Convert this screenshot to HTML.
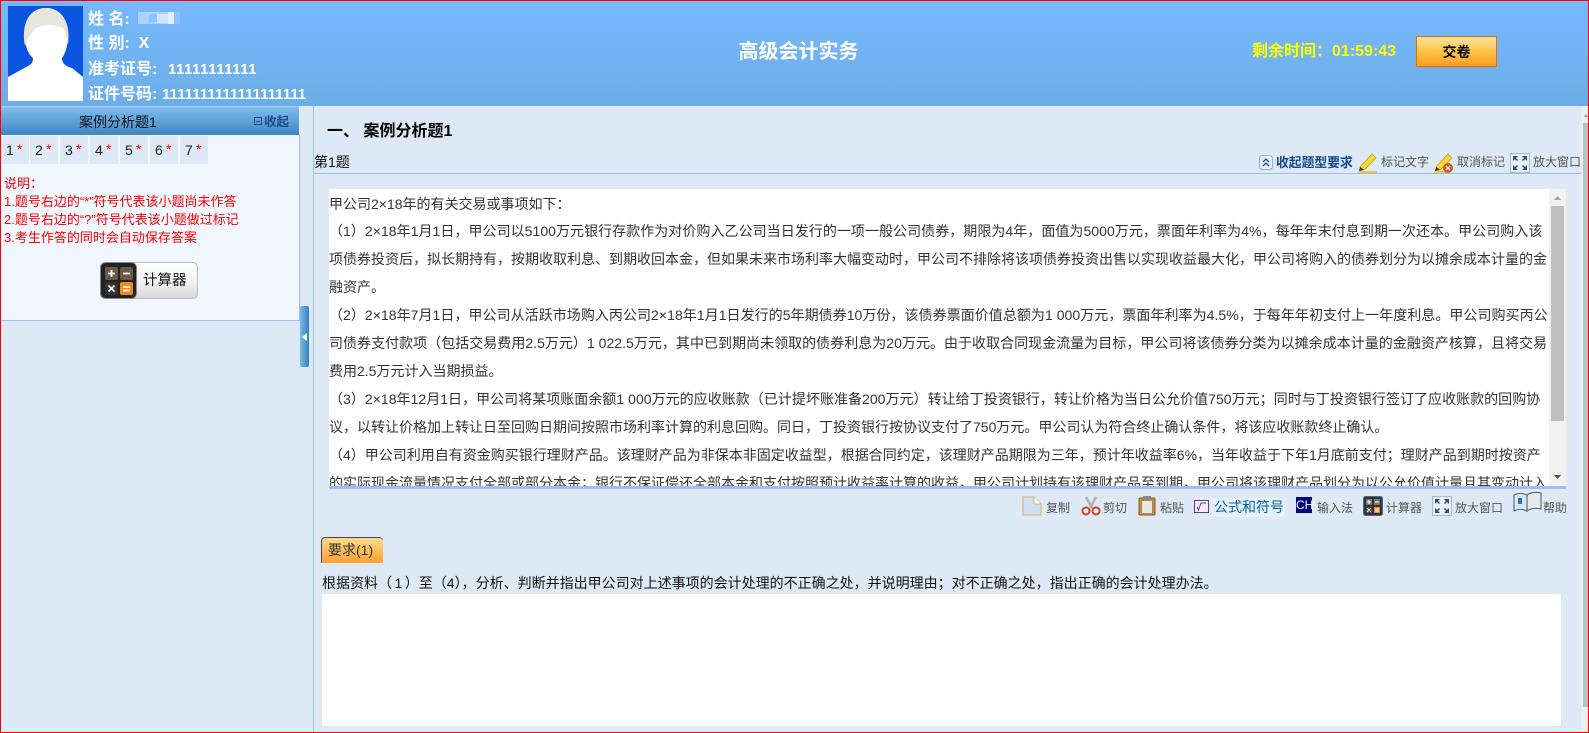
<!DOCTYPE html>
<html lang="zh-CN"><head><meta charset="utf-8"><title>高级会计实务</title>
<style>
*{box-sizing:border-box}
html,body{margin:0;padding:0}
body{width:1589px;height:733px;overflow:hidden;position:relative;background:#dde9f5;font-family:"Liberation Sans","Noto Sans CJK SC",sans-serif;font-size:14px;color:#333}
.a{position:absolute;white-space:nowrap}
.hd{left:0;top:0;width:1589px;height:106px;background:linear-gradient(#78b9ff,#6cade8)}
.w{color:#fff;font-weight:bold;font-size:16px;line-height:24px;left:88px}
.w b{position:absolute;top:0;font-size:15px;font-weight:bold}
.q{top:136px;width:28px;height:28px;background:#dde9f5;color:#222;font-size:14px;line-height:28px}
.q span{position:absolute;left:5px}
.q i{position:absolute;left:16px;top:-1px;font-style:normal;color:#f00;font-size:14px}
.r{left:4px;color:#f00;font-size:13px;line-height:18px}
.t{position:absolute;left:0;white-space:nowrap;line-height:28px;height:28px;color:#333}
.g{color:#555;font-size:12px;line-height:16px}
svg{position:absolute;overflow:visible}
</style></head><body>
<div class="a hd"></div>
<svg style="left:8px;top:6px" width="75" height="95" viewBox="0 0 75 95"><rect width="75" height="95" fill="#0a55e0"/><path d="M0 71L20 60C24 58 25 56 25 52C20 48 17 40 17 30C15 14 24 2 38 2C52 2 61 14 60 30C60 40 57 48 54 52C54 56 56 60 64 62L75 71V95H0Z" fill="#fff"/><path d="M17 40C13 20 20 2 38 2C54 2 63 18 60 38C58 30 58 26 55 22C45 18 35 18 28 22C25 26 20 30 17 40Z" fill="#e6e6da"/></svg>
<div class="a w" style="top:8px;">姓&nbsp;名:</div>
<svg style="left:138px;top:12px" width="42" height="12"><rect width="42" height="12" fill="#a9d2ff"/><rect x="11" y="2" width="8" height="8" fill="#8cc2ff"/><rect x="19" y="2" width="12" height="9" fill="#cfe4ff"/><rect x="30" width="6" height="12" fill="#e4f0ff"/><rect x="36" width="6" height="12" fill="#8fc3fb"/></svg>
<div class="a w" style="top:32px">性&nbsp;别:&nbsp; X</div>
<div class="a w" style="top:58px">准考证号:<b style="left:80px;letter-spacing:.5px">11111111111</b></div>
<div class="a w" style="top:83px">证件号码:<b style="left:74px;letter-spacing:.03px">1111111111111111111</b></div>
<div class="a" style="left:728px;top:38px;width:141px;text-align:center;color:#fff;font-weight:bold;font-size:20px;line-height:28px">高级会计实务</div>
<div class="a" style="left:1252px;top:41px;color:#ff0;font-weight:bold;font-size:16px;line-height:22px">剩余时间：<span style="font-size:16px">01:59:43</span></div>
<div class="a" style="left:1416px;top:36px;width:81px;height:31px;border:1px solid #de7000;background:linear-gradient(#f8e2a4,#ffc040 55%,#ff9a26);color:#000;font-weight:bold;font-size:14px;line-height:30px;text-align:center">交卷</div>

<div class="a" style="left:1px;top:106px;width:298px;height:29px;background:linear-gradient(#a6c4f0 0,#a6c4f0 1px,#7dbbec 2px,#3f87c4);"></div>
<div class="a" style="left:79px;top:111px;color:#111;font-size:14px;line-height:22px">案例分析题1</div>
<div class="a" style="left:254px;top:117px;width:8px;height:8px;border:1px solid #1f4e8c"></div>
<div class="a" style="left:256px;top:121px;width:4px;height:1px;background:#1f4e8c"></div>
<div class="a" style="left:264px;top:111px;color:#1a4a8a;font-weight:bold;font-size:12.500px;line-height:22px">收起</div>

<div class="a" style="left:1px;top:135px;width:299px;height:186px;background:#f0f7ff;border-right:1px solid #a3bcee;border-bottom:1px solid #a3bcee"></div>
<div class="a q" style="left:1px"><span>1</span><i>*</i></div>
<div class="a q" style="left:30px"><span>2</span><i>*</i></div>
<div class="a q" style="left:60px"><span>3</span><i>*</i></div>
<div class="a q" style="left:90px"><span>4</span><i>*</i></div>
<div class="a q" style="left:120px"><span>5</span><i>*</i></div>
<div class="a q" style="left:150px"><span>6</span><i>*</i></div>
<div class="a q" style="left:180px"><span>7</span><i>*</i></div>
<div class="a r" style="top:175px">说明：</div>
<div class="a r" style="top:193px">1.题号右边的“*”符号代表该小题尚未作答</div>
<div class="a r" style="top:211px">2.题号右边的“?”符号代表该小题做过标记</div>
<div class="a r" style="top:229px">3.考生作答的同时会自动保存答案</div>
<div class="a" style="left:100px;top:262px;width:98px;height:37px;border:1px solid #bbb;border-radius:5px;background:linear-gradient(#fff,#f4f4f4 50%,#d8d8d8)"></div>
<svg style="left:100px;top:262px" width="37" height="37" viewBox="0 0 37 37"><rect x=".5" y=".5" width="36" height="36" rx="5" fill="#222" stroke="#888"/><rect x="5" y="5" width="13" height="13" rx="2" fill="#6b5a4c"/><rect x="20" y="5" width="13" height="13" rx="2" fill="#6b5a4c"/><rect x="5" y="20" width="13" height="13" rx="2" fill="#333"/><rect x="20" y="20" width="13" height="13" rx="2" fill="#ee8a1c"/><path d="M8 11.5h7M11.5 8v7M23 11.500h7M8.500 23.500l6 6M14.500 23.500l-6 6M23 25h7M23 28.500h7" stroke="#fff" stroke-width="1.800" fill="none"/></svg>
<div class="a" style="left:143px;top:270px;color:#111;font-size:14.500px;line-height:22px">计算器</div>

<div class="a" style="left:300px;top:306px;width:9px;height:61px;border-radius:2px;background:linear-gradient(90deg,#7fb8e6,#2f82c6)"></div>
<svg style="left:302px;top:333px" width="5" height="8"><path d="M5 0V8L0 4Z" fill="#fff"/></svg>
<div class="a" style="left:313px;top:106px;width:1px;height:626px;background:#a3bcee"></div>

<div class="a" style="left:327px;top:121px;color:#000;font-weight:bold;font-size:16px;line-height:22px">一、 案例分析题1</div>
<div class="a" style="left:314px;top:152px;color:#111;font-size:14px;line-height:20px">第1题</div>
<div class="a" style="left:314px;top:173px;width:1267px;height:1px;background:#a3bcee"></div>

<svg style="left:1259px;top:155px" width="15" height="15"><rect x=".5" y=".5" width="13" height="14" rx="3" fill="#e8f0fa" stroke="#9db0c8"/><path d="M4 7l3-3 3 3M4 11l3-3 3 3" stroke="#1a4a8a" stroke-width="1.300" fill="none"/></svg>
<div class="a" style="left:1276px;top:154px;color:#174a8c;font-weight:bold;font-size:12.800px;line-height:18px">收起题型要求</div>
<svg style="left:1358px;top:153px" width="20" height="20"><path d="M2 14L14 1l4 4L6 17Z" fill="#f8d838" stroke="#c89a10" stroke-width=".8"/><path d="M2 14l4 3-5 1Z" fill="#333"/><rect x="0" y="18" width="19" height="2" fill="#f0c830"/></svg>
<div class="a g" style="left:1381px;top:154px">标记文字</div>
<svg style="left:1434px;top:153px" width="20" height="20"><path d="M2 14L14 1l4 4L6 17Z" fill="#f8d838" stroke="#c89a10" stroke-width=".8"/><path d="M2 14l4 3-5 1Z" fill="#333"/><rect x="0" y="18" width="12" height="2" fill="#f0c830"/><circle cx="14" cy="15" r="5" fill="#d0582a"/><path d="M12 13l4 4M16 13l-4 4" stroke="#fff" stroke-width="1.300"/></svg>
<div class="a g" style="left:1457px;top:154px">取消标记</div>
<svg style="left:1510px;top:153px" width="20" height="20"><rect x=".5" y=".5" width="19" height="19" fill="#e8f0f8" stroke="#b0b8c0"/><path d="M3 3h5l-2 2 2 2-1 1-2-2-2 2ZM17 3v5l-2-2-2 2-1-1 2-2-2-2ZM3 17v-5l2 2 2-2 1 1-2 2 2 2ZM17 17h-5l2-2-2-2 1-1 2 2 2-2Z" fill="#1d4f94"/></svg>
<div class="a g" style="left:1533px;top:154px">放大窗口</div>

<div class="a" style="left:1581px;top:106px;width:7px;height:626px;background:#eeeeee"></div>
<div class="a" style="left:1583px;top:123px;width:5px;height:584px;background:#bdbdbd"></div>
<svg style="left:1584px;top:114px" width="4" height="3"><path d="M0 3L2 0L4 3Z" fill="#999"/></svg>

<div class="a" style="left:329px;top:189px;width:1237px;height:297px;background:#fff;overflow:hidden">
<div class="t" style="top:1px">甲公司2×18年的有关交易或事项如下：</div>
<div class="t" style="top:28px;letter-spacing:.045px">（1）2×18年1月1日，甲公司以5100万元银行存款作为对价购入乙公司当日发行的一项一般公司债券，期限为4年，面值为5000万元，票面年利率为4%，每年年末付息到期一次还本。甲公司购入该</div>
<div class="t" style="top:56px">项债券投资后，拟长期持有，按期收取利息、到期收回本金，但如果未来市场利率大幅变动时，甲公司不排除将该项债券投资出售以实现收益最大化，甲公司将购入的债券划分为以摊余成本计量的金</div>
<div class="t" style="top:84px">融资产。</div>
<div class="t" style="top:112px;letter-spacing:.045px">（2）2×18年7月1日，甲公司从活跃市场购入丙公司2×18年1月1日发行的5年期债券10万份，该债券票面价值总额为1 000万元，票面年利率为4.5%，于每年年初支付上一年度利息。甲公司购买丙公</div>
<div class="t" style="top:140px;letter-spacing:.025px">司债券支付款项（包括交易费用2.5万元）1 022.5万元，其中已到期尚未领取的债券利息为20万元。由于收取合同现金流量为目标，甲公司将该债券分类为以摊余成本计量的金融资产核算，且将交易</div>
<div class="t" style="top:168px">费用2.5万元计入当期损益。</div>
<div class="t" style="top:196px;letter-spacing:.03px">（3）2×18年12月1日，甲公司将某项账面余额1 000万元的应收账款（已计提坏账准备200万元）转让给丁投资银行，转让价格为当日公允价值750万元；同时与丁投资银行签订了应收账款的回购协</div>
<div class="t" style="top:224px">议，以转让价格加上转让日至回购日期间按照市场利率计算的利息回购。同日，丁投资银行按协议支付了750万元。甲公司认为符合终止确认条件，将该应收账款终止确认。</div>
<div class="t" style="top:252px">（4）甲公司利用自有资金购买银行理财产品。该理财产品为非保本非固定收益型，根据合同约定，该理财产品期限为三年，预计年收益率6%，当年收益于下年1月底前支付；理财产品到期时按资产</div>
<div class="t" style="top:280px">的实际现金流量情况支付全部或部分本金；银行不保证偿还全部本金和支付按照预计收益率计算的收益，甲公司计划持有该理财产品至到期，甲公司将该理财产品划分为以公允价值计量且其变动计入</div>
<div class="a" style="left:1220px;top:0;width:17px;height:297px;background:#f1f1f1"></div>
<div class="a" style="left:1222px;top:17px;width:13px;height:215px;background:#c0c0c0"></div>
<svg style="left:1225px;top:7px" width="7" height="4"><path d="M0 4L3.500 0L7 4Z" fill="#a3a3a3"/></svg>
<svg style="left:1225px;top:286px" width="7" height="4"><path d="M0 0L3.500 4L7 0Z" fill="#505050"/></svg>
</div>
<div class="a" style="left:329px;top:486px;width:1237px;height:3px;background:#a3bcee"></div>

<svg style="left:1022px;top:496px" width="21" height="20"><path d="M1 1h11l7 7v11H1Z" fill="#cfe0f2" stroke="#d8b070"/><path d="M12 1v7h7" fill="#fff" stroke="#d8b070"/></svg>
<div class="a g" style="left:1046px;top:500px">复制</div>
<svg style="left:1081px;top:496px" width="20" height="20"><path d="M5 1l6 11M15 1L9 12" stroke="#b0b0b0" stroke-width="2.500"/><circle cx="5" cy="15" r="3.500" fill="#fff" stroke="#d0401c" stroke-width="2"/><circle cx="15" cy="15" r="3.500" fill="#fff" stroke="#d0401c" stroke-width="2"/></svg>
<div class="a g" style="left:1103px;top:500px">剪切</div>
<svg style="left:1138px;top:496px" width="18" height="20"><rect x="1" y="2" width="16" height="17" rx="1" fill="#b88a48" stroke="#8a6428"/><rect x="4" y="5" width="10" height="12" fill="#e8e8e0"/><rect x="5" y="0" width="8" height="4" fill="#888"/></svg>
<div class="a g" style="left:1160px;top:500px">粘贴</div>
<svg style="left:1194px;top:500px" width="15" height="13"><rect x=".5" y=".5" width="14" height="12" fill="#f2eef8" stroke="#6a3a8a"/><path d="M3 7l1.500 3L7 3h5" stroke="#6a3a8a" fill="none"/></svg>
<div class="a" style="left:1211px;top:498px;width:74px;height:19px;background:#e4f0fa;color:#0a62a8;font-size:14px;line-height:19px;padding-left:3px">公式和符号</div>
<div class="a" style="left:1296px;top:497px;width:16px;height:16px;background:#000080;color:#fff;font-size:12px;line-height:17px;text-align:center">CH</div>
<div class="a g" style="left:1317px;top:500px">输入法</div>
<svg style="left:1363px;top:496px" width="20" height="20"><rect x=".5" y=".5" width="19" height="19" rx="2" fill="#333" stroke="#4a6a90"/><rect x="3" y="3" width="6" height="6" fill="#777"/><rect x="11" y="3" width="6" height="6" fill="#777"/><rect x="3" y="11" width="6" height="6" fill="#444"/><rect x="11" y="11" width="6" height="6" fill="#ee8a1c"/><path d="M4 6h4M6 4v4M12 6h4M4 12l4 4M8 12l-4 4M12 13h4M12 15h4" stroke="#fff"/></svg>
<div class="a g" style="left:1386px;top:500px">计算器</div>
<svg style="left:1432px;top:496px" width="20" height="20"><rect x=".5" y=".5" width="19" height="19" fill="#e8f0f8" stroke="#b0b8c0"/><path d="M3 3h5l-2 2 2 2-1 1-2-2-2 2ZM17 3v5l-2-2-2 2-1-1 2-2-2-2ZM3 17v-5l2 2 2-2 1 1-2 2 2 2ZM17 17h-5l2-2-2-2 1-1 2 2 2-2Z" fill="#1d4f94"/></svg>
<div class="a g" style="left:1455px;top:500px">放大窗口</div>
<svg style="left:1513px;top:492px" width="29" height="20"><path d="M1 3c4-2 9-2 13 0v16c-4-2-9-2-13 0Z" fill="#d8e8f8" stroke="#456"/><path d="M14 3c4-3 9-3 14-2v16c-5-1-10-1-14 2Z" fill="#e8e8e8" stroke="#456"/><rect x="5" y="6" width="4" height="6" fill="#2a72c0"/></svg>
<div class="a g" style="left:1543px;top:500px">帮助</div>

<div class="a" style="left:321px;top:537px;width:62px;height:26px;border-top:1px solid #445;border-left:1px solid #445;border-radius:4px 4px 0 0;background:linear-gradient(#f9dc8c,#ffa030);color:#333;font-size:14px;line-height:25px;padding-left:6px">要求(1)</div>
<div class="a" style="left:322px;top:573px;color:#111;font-size:14px;line-height:20px">根据资料（<span style="margin:0 2.500px">1</span>）至（4），分析、判断并指出甲公司对上述事项的会计处理的不正确之处，并说明理由；对不正确之处，指出正确的会计处理办法。</div>
<div class="a" style="left:322px;top:594px;width:1239px;height:132px;background:#fff"></div>

<div class="a" style="left:0;top:0;width:1589px;height:733px;border:1px solid #f00"></div>
</body></html>
